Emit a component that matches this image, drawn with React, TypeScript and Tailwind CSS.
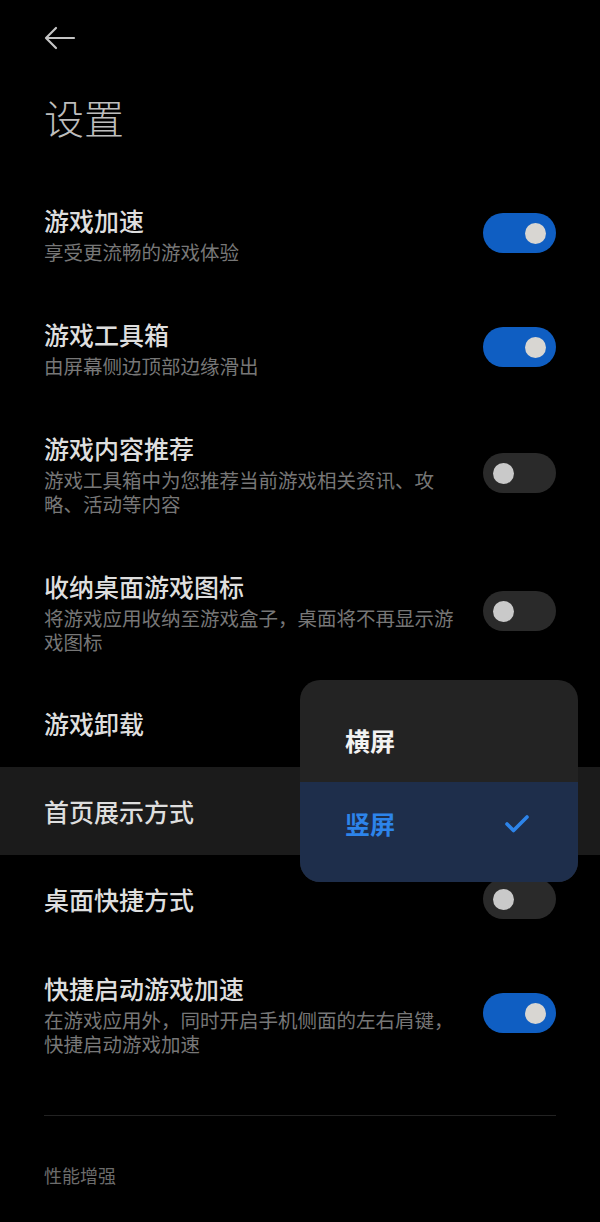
import React from 'react';

type Row = {
  title: string;
  desc?: string;
  toggle?: boolean;
  highlight?: boolean;
};

const ROWS: Row[] = [
  { title: '游戏加速', desc: '享受更流畅的游戏体验', toggle: true },
  { title: '游戏工具箱', desc: '由屏幕侧边顶部边缘滑出', toggle: true },
  { title: '游戏内容推荐', desc: '游戏工具箱中为您推荐当前游戏相关资讯、攻略、活动等内容', toggle: false },
  { title: '收纳桌面游戏图标', desc: '将游戏应用收纳至游戏盒子，桌面将不再显示游戏图标', toggle: false },
  { title: '游戏卸载' },
  { title: '首页展示方式', highlight: true },
  { title: '桌面快捷方式', toggle: false },
  { title: '快捷启动游戏加速', desc: '在游戏应用外，同时开启手机侧面的左右肩键，快捷启动游戏加速', toggle: true },
];

function Toggle({ on }: { on: boolean }) {
  return (
    <div
      className={`w-[73px] h-[40px] rounded-full flex items-center px-[10px] shrink-0 ${
        on ? 'bg-[#0f5ec2] justify-end' : 'bg-[#2a2a2a] justify-start'
      }`}
    >
      <span className={`w-[21px] h-[21px] rounded-full ${on ? 'bg-[#d8d6d2]' : 'bg-[#c9c9c9]'}`} />
    </div>
  );
}

function SettingRow({ row }: { row: Row }) {
  const hasToggle = row.toggle !== undefined;
  return (
    <div className={`px-[44px] ${row.highlight ? 'bg-[#1b1b1b]' : ''}`}>
      <div
        className={`flex items-center justify-between ${
          row.desc ? 'pt-[27px] pb-[25px]' : 'h-[88px]'
        }`}
      >
        <div className="w-[420px]">
          <div className="text-[25px] leading-[36px] font-medium text-[#dedede]">{row.title}</div>
          {row.desc && (
            <div className="mt-[2px] text-[19.5px] leading-[24px] text-[#777777]">{row.desc}</div>
          )}
        </div>
        {hasToggle && <Toggle on={!!row.toggle} />}
      </div>
    </div>
  );
}

export default function App() {
  return (
    <div className="relative w-[600px] min-h-[1222px] bg-black font-['Noto_Sans_CJK_SC','Noto_Sans',sans-serif]">
      {/* top bar */}
      <div className="h-[75px] flex items-center px-[44px]">
        <svg width="32" height="24" viewBox="0 0 32 24" fill="none" stroke="#c4c4c4" strokeWidth="2.2" strokeLinecap="round" strokeLinejoin="round">
          <path d="M30 12H3" />
          <path d="M12 2L2 12l10 10" />
        </svg>
      </div>

      <h1 className="px-[44px] pt-[14px] pb-[30px] text-[40px] leading-[56px] font-light text-[#bdbdbd]">设置</h1>

      {ROWS.map((row) => (
        <SettingRow key={row.title} row={row} />
      ))}

      <div className="mx-[44px] mt-[34px] h-px bg-[#222222]" />

      <div className="px-[44px] mt-[47px] text-[18px] leading-[24px] text-[#6c6c6c]">性能增强</div>

      {/* display mode popup */}
      <div className="absolute left-[300px] top-[680px] w-[278px] rounded-[20px] overflow-hidden bg-[#232323] z-10">
        <div className="h-[102px] pt-[19px] pl-[45px] flex items-center text-[25px] font-semibold text-[#f2f2f2]">横屏</div>
        <div className="h-[100px] pb-[17px] pl-[45px] pr-[48px] flex items-center justify-between bg-[#1e2e4b]">
          <span className="text-[25px] font-semibold text-[#2d84ea]">竖屏</span>
          <svg width="26" height="20" viewBox="0 0 26 20" fill="none" stroke="#2d84ea" strokeWidth="3.6" strokeLinecap="round" strokeLinejoin="round">
            <path d="M3 10l6.5 6.5L23 3" />
          </svg>
        </div>
      </div>
    </div>
  );
}
